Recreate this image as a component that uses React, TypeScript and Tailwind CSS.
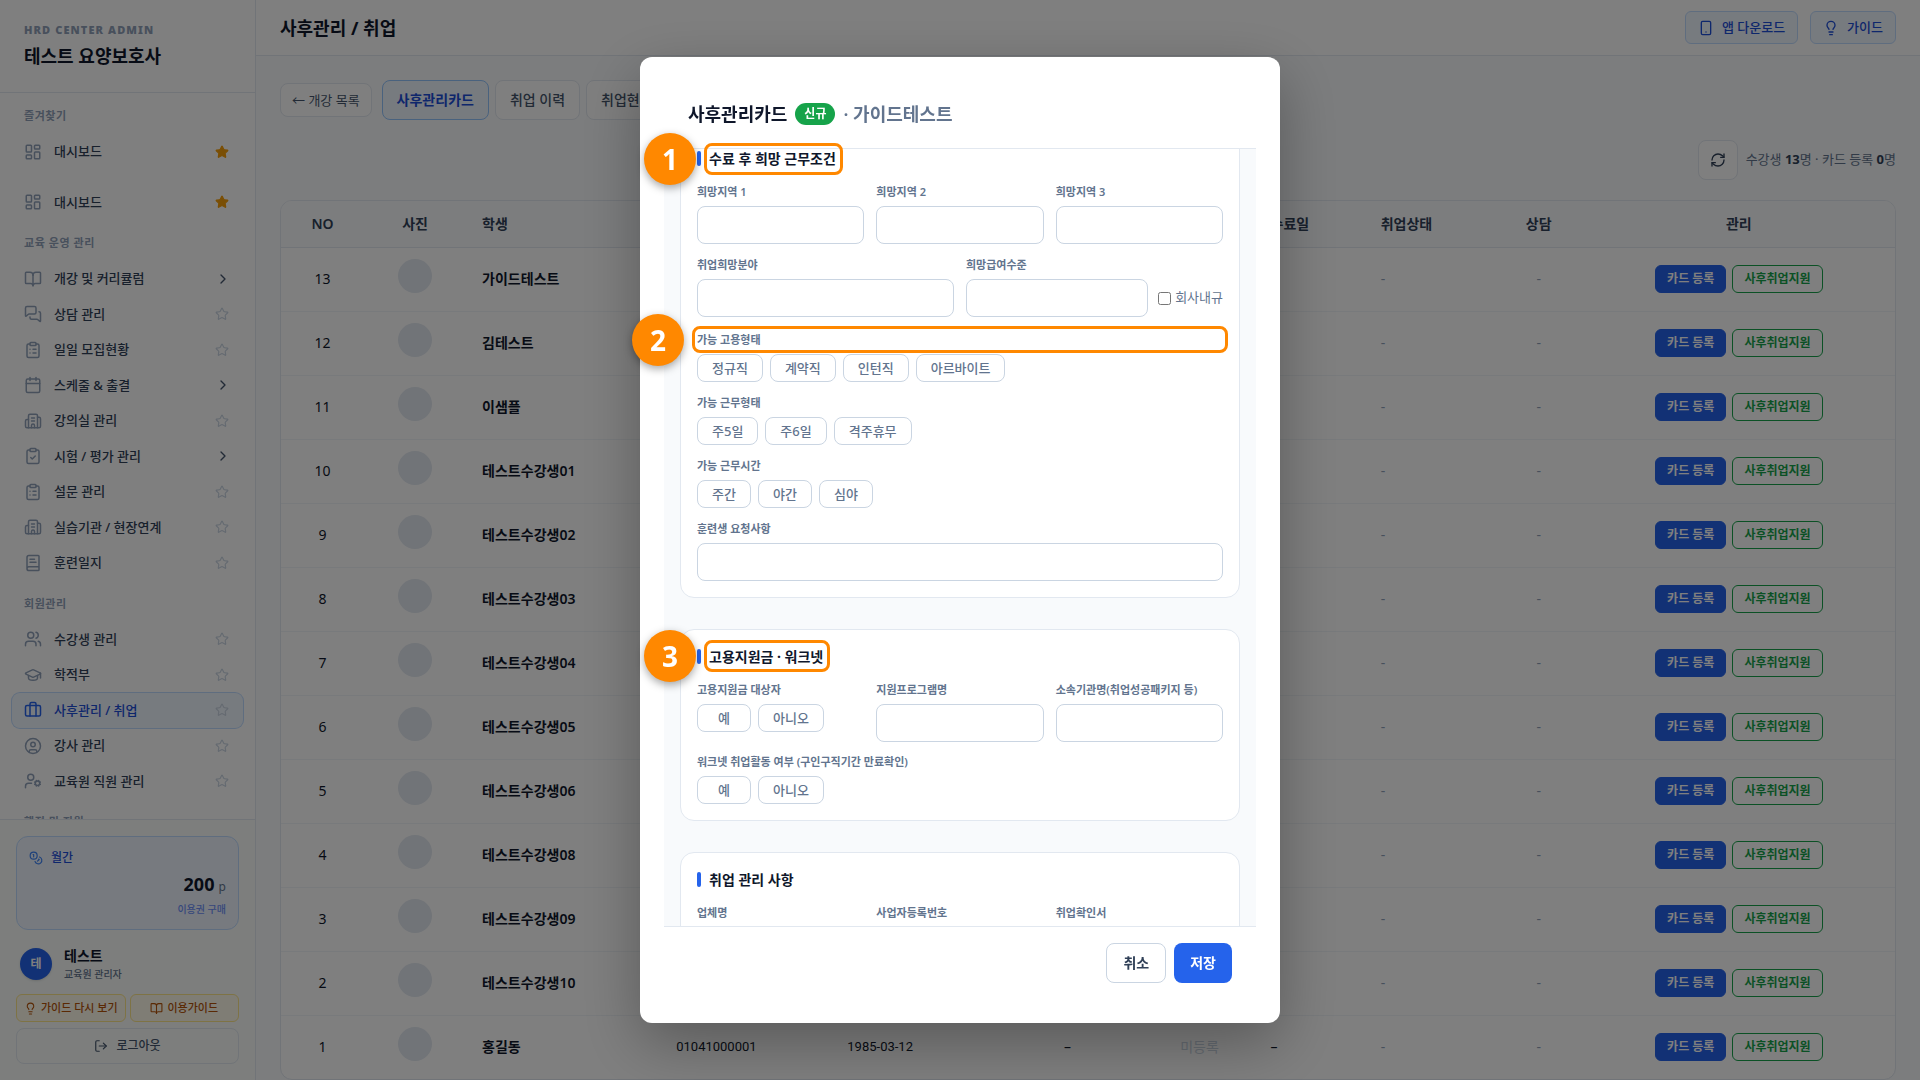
import React, { useLayoutEffect, useRef, useState } from 'react';
import {
  BookOpen,
  BookText,
  Briefcase,
  Building2,
  Calendar,
  ChevronRight,
  CircleUser,
  ClipboardCheck,
  ClipboardList,
  Coins,
  GraduationCap,
  LayoutDashboard,
  Lightbulb,
  LogOut,
  MessagesSquare,
  RefreshCw,
  Smartphone,
  Star,
  UserCog,
  Users,
  type LucideIcon,
} from 'lucide-react';

type MenuItem = {
  label: string;
  icon: LucideIcon;
  kind?: 'fav' | 'group' | 'plain';
  active?: boolean;
};

type MenuSection = { title?: string; items: MenuItem[] };

const menu: MenuSection[] = [
  { title: '즐겨찾기', items: [{ label: '대시보드', icon: LayoutDashboard, kind: 'fav' }] },
  { items: [{ label: '대시보드', icon: LayoutDashboard, kind: 'fav' }] },
  {
    title: '교육 운영 관리',
    items: [
      { label: '개강 및 커리큘럼', icon: BookOpen, kind: 'group' },
      { label: '상담 관리', icon: MessagesSquare },
      { label: '일일 모집현황', icon: ClipboardList },
      { label: '스케줄 & 출결', icon: Calendar, kind: 'group' },
      { label: '강의실 관리', icon: Building2 },
      { label: '시험 / 평가 관리', icon: ClipboardCheck, kind: 'group' },
      { label: '설문 관리', icon: ClipboardList },
      { label: '실습기관 / 현장연계', icon: Building2 },
      { label: '훈련일지', icon: BookText },
    ],
  },
  {
    title: '회원관리',
    items: [
      { label: '수강생 관리', icon: Users },
      { label: '학적부', icon: GraduationCap },
      { label: '사후관리 / 취업', icon: Briefcase, active: true },
      { label: '강사 관리', icon: CircleUser },
      { label: '교육원 직원 관리', icon: UserCog },
    ],
  },
  { title: '행정 및 지원', items: [] },
];

const students = [
  '가이드테스트',
  '김테스트',
  '이샘플',
  '테스트수강생01',
  '테스트수강생02',
  '테스트수강생03',
  '테스트수강생04',
  '테스트수강생05',
  '테스트수강생06',
  '테스트수강생08',
  '테스트수강생09',
  '테스트수강생10',
  '홍길동',
];

function Sidebar() {
  return (
    <aside className="flex w-64 shrink-0 flex-col border-r border-slate-200 bg-white">
      <div className="flex h-[93px] shrink-0 flex-col justify-center border-b border-slate-200 px-6">
        <div className="text-[11px] leading-4 font-black tracking-widest text-slate-400">
          HRD CENTER ADMIN
        </div>
        <div className="mt-1 text-lg leading-7 font-bold text-slate-900">테스트 요양보호사</div>
      </div>

      {/* 메뉴 */}
      <nav className="flex min-h-0 flex-1 flex-col gap-[15px] overflow-hidden px-3 pt-[15px]">
        {menu.map((section, i) => (
          <div key={i} className="shrink-0">
            {section.title && (
              <div className="mb-[10px] px-3 text-[11px] leading-4 font-semibold tracking-wider text-slate-400">
                {section.title}
              </div>
            )}
            {section.items.map((item) => (
              <MenuRow key={item.label} item={item} />
            ))}
          </div>
        ))}
      </nav>

      <SidebarFooter />
    </aside>
  );
}

function MenuRow({ item }: { item: MenuItem }) {
  const Icon = item.icon;
  return (
    <div
      className={`flex items-center rounded-lg px-3 ${
        item.active ? 'bg-[#eff6ff] text-[#1d4ed8] ring-1 ring-[#bfdbfe]' : 'text-slate-700'
      }`}
    >
      <a
        href="#"
        className="flex flex-1 items-center gap-3 py-2 text-[13px] leading-normal font-medium"
      >
        <Icon
          size={18}
          strokeWidth={2}
          className={item.active ? 'text-[#2563eb]' : 'text-slate-400'}
        />
        {item.label}
      </a>
      <div className="flex w-4 justify-start">
        {item.kind === 'group' ? (
          <ChevronRight size={16} className="text-slate-600" />
        ) : (
          <button type="button" aria-label={`${item.label} 즐겨찾기`}>
            <Star
              size={14}
              strokeWidth={2}
              className={item.kind === 'fav' ? 'fill-[#f59e0b] text-[#f59e0b]' : 'text-slate-300'}
            />
          </button>
        )}
      </div>
    </div>
  );
}

function SidebarFooter() {
  return (
    <div className="shrink-0 border-t border-slate-200 bg-[#fafdfb] p-4">
      {/* 이용권 */}
      <div className="rounded-xl border border-[#bfdbfe] bg-[#eff5ff] px-3 pt-[13px] pb-3">
        <div className="flex items-center gap-2 text-xs leading-4 font-medium text-[#1d4ed8]">
          <Coins size={14} className="text-[#3b82f6]" />
          월간
        </div>
        <div className="mt-1 text-right leading-7">
          <span className="text-lg leading-7 font-bold text-slate-900">200</span>{' '}
          <span className="text-xs text-slate-500">p</span>
        </div>
        <a
          href="#"
          className="mt-[2px] block text-right text-[10px] leading-4 font-medium text-[#6d8ff7]"
        >
          이용권 구매
        </a>
      </div>

      {/* 사용자 */}
      <div className="mt-[14px] flex h-10 items-center gap-3 px-1">
        <div className="flex size-8 items-center justify-center rounded-full bg-[#2563eb] text-xs font-bold text-white shadow">
          테
        </div>
        <div>
          <div className="text-sm leading-5 font-bold text-slate-900">테스트</div>
          <div className="text-[10px] leading-4 font-medium text-slate-500">교육원 관리자</div>
        </div>
      </div>

      <div className="mt-[10px] grid grid-cols-2 gap-1">
        <button
          type="button"
          className="flex h-7 items-center justify-center gap-1 rounded-md border border-[#fde68a] bg-[#fffbeb] text-[11px] font-medium whitespace-nowrap text-[#b45309]"
        >
          <Lightbulb size={13} />
          가이드 다시 보기
        </button>
        <button
          type="button"
          className="flex h-7 items-center justify-center gap-1 rounded-md border border-[#fde68a] bg-[#fffbeb] text-[11px] font-medium text-[#b45309]"
        >
          <BookOpen size={13} />
          이용가이드
        </button>
      </div>
      <button
        type="button"
        className="mt-[6px] flex h-9 w-full items-center justify-center gap-2 rounded-lg border border-slate-200 text-xs font-medium text-slate-600"
      >
        <LogOut size={14} />
        로그아웃
      </button>
    </div>
  );
}

function StudentTable() {
  return (
    <div className="overflow-hidden rounded-xl border border-slate-200 bg-white">
      <table className="w-full table-fixed text-sm">
        <colgroup>
          <col className="w-[83px]" />
          <col className="w-[102px]" />
          <col className="w-[194px]" />
          <col className="w-[171px]" />
          <col className="w-[159px]" />
          <col className="w-[154px]" />
          <col className="w-[110px]" />
          <col className="w-[110px]" />
          <col className="w-[130px]" />
          <col className="w-[88px]" />
          <col className="w-[312px]" />
        </colgroup>
        <thead>
          <tr className="h-[46px] border-b border-slate-200 bg-slate-50 text-left text-slate-700 *:font-semibold">
            <th className="text-center">NO</th>
            <th className="text-center">사진</th>
            <th className="px-4">학생</th>
            <th className="px-4">연락처</th>
            <th className="px-4">생년월일</th>
            <th className="text-center">과정</th>
            <th className="text-center">카드</th>
            <th className="px-4">수료일</th>
            <th className="px-4">취업상태</th>
            <th className="text-center">상담</th>
            <th className="text-center">관리</th>
          </tr>
        </thead>
        <tbody>
          {students.map((name, i) => {
            const last = i === students.length - 1;
            return (
              <tr key={name} className="h-16 border-b border-slate-100 text-slate-900 last:border-0">
                <td className="text-center">{students.length - i}</td>
                <td className="pb-[6px] text-center">
                  <div className="mx-auto size-[34px] rounded-full bg-slate-200" />
                </td>
                <td className="px-4 font-semibold">{name}</td>
                <td className="px-4 font-[Roboto,sans-serif] text-[13px]">
                  {last && '01041000001'}
                </td>
                <td className="px-4 font-[Roboto,sans-serif] text-[13px]">
                  {last && '1985-03-12'}
                </td>
                <td className="text-center">{last && '–'}</td>
                <td className="text-center text-slate-300">미등록</td>
                <td className="px-4">{last && '–'}</td>
                <td className="px-4 text-slate-400">-</td>
                <td className="text-center text-slate-400">-</td>
                <td>
                  <div className="flex justify-center gap-[6px] text-xs font-semibold">
                    <button
                      type="button"
                      className="h-7 rounded-md border border-[#2563eb] bg-[#2563eb] px-[11px] text-white"
                    >
                      카드 등록
                    </button>
                    <button
                      type="button"
                      className="h-7 rounded-md border border-[#16a34a] bg-white px-[11px] text-[#16a34a]"
                    >
                      사후취업지원
                    </button>
                  </div>
                </td>
              </tr>
            );
          })}
        </tbody>
      </table>
    </div>
  );
}

function FormCard({ title, children }: { title: string; children: React.ReactNode }) {
  return (
    <section className="rounded-[14px] border border-slate-200 bg-white p-4">
      <h3 className="mb-[15px] flex h-[21px] items-center gap-2 text-sm font-bold text-slate-900">
        <span className="h-[15px] w-1 rounded-xs bg-[#2563eb]" />
        {title}
      </h3>
      {children}
    </section>
  );
}

function TextField({ id, label }: { id: string; label: string }) {
  return (
    <div>
      <label htmlFor={id} className="block text-[11px] leading-4 font-semibold text-slate-500">
        {label}
      </label>
      <input
        id={id}
        type="text"
        className="mt-[6px] block h-[38px] w-full rounded-lg border border-slate-300 bg-white px-3 text-sm"
      />
    </div>
  );
}

// 복수 선택 버튼 묶음
function ChipField({ label, options }: { label: string; options: string[] }) {
  const [selected, setSelected] = useState<string[]>([]);

  const toggle = (option: string) => {
    setSelected((prev) =>
      prev.includes(option) ? prev.filter((v) => v !== option) : [...prev, option]
    );
  };

  return (
    <div role="group" aria-label={label}>
      <div className="text-[11px] leading-4 font-semibold text-slate-500">{label}</div>
      <div className="mt-[6px] flex gap-[7px]">
        {options.map((option) => (
          <button
            key={option}
            type="button"
            onClick={() => toggle(option)}
            className={`h-7 min-w-[54px] rounded-lg border px-[14px] text-[13px] leading-5 font-medium ${
              selected.includes(option)
                ? 'border-[#2563eb] bg-[#eff6ff] text-[#2563eb]'
                : 'border-slate-300 bg-white text-slate-500'
            }`}
          >
            {option}
          </button>
        ))}
      </div>
    </div>
  );
}

// 안내 번호 + 강조 테두리
function Callout({ no, className }: { no: number; className: string }) {
  return (
    <div
      className={`pointer-events-none absolute rounded-lg border-3 border-[#ff8800] ${className}`}
    >
      <span className="absolute top-1/2 -left-[63px] flex size-[52px] -translate-y-1/2 items-center justify-center rounded-full bg-[#ff8800] text-[28px] font-bold text-white shadow-[0_3px_8px_rgba(0,0,0,0.35)]">
        {no}
      </span>
    </div>
  );
}

function CardModal() {
  const bodyRef = useRef<HTMLDivElement>(null);

  useLayoutEffect(() => {
    if (bodyRef.current) bodyRef.current.scrollTop = 38;
  }, []);

  return (
    <div className="fixed inset-0 flex items-center justify-center bg-black/50">
      <div
        role="dialog"
        aria-labelledby="card-title"
        className="relative flex max-h-[calc(100vh-114px)] w-[640px] flex-col rounded-xl bg-white p-6 shadow-[0_20px_60px_rgba(0,0,0,0.3)]"
      >
        <header className="flex h-[68px] shrink-0 items-center gap-2 border-b border-slate-200 px-6 pb-[2px]">
          <h2 id="card-title" className="text-lg font-bold text-slate-900">
            사후관리카드
          </h2>
          <span className="flex h-[22px] items-center rounded-full bg-[#16a34a] px-[9px] text-xs font-bold text-white">
            신규
          </span>
          <span className="text-lg font-semibold text-slate-500">· 가이드테스트</span>
        </header>

        <div
          ref={bodyRef}
          className="flex min-h-0 flex-col gap-[31px] overflow-y-auto bg-slate-50 px-4 py-5 [scrollbar-width:none] *:shrink-0"
        >
          <FormCard title="수료 후 희망 근무조건">
            <div className="flex flex-col gap-[13px]">
              <div className="grid grid-cols-3 gap-3">
                <TextField id="region1" label="희망지역 1" />
                <TextField id="region2" label="희망지역 2" />
                <TextField id="region3" label="희망지역 3" />
              </div>
              <div className="grid grid-cols-2 gap-3">
                <TextField id="field" label="취업희망분야" />
                <div className="flex items-end gap-[10px]">
                  <div className="min-w-0 flex-1">
                    <TextField id="salary" label="희망급여수준" />
                  </div>
                  <label className="flex h-[38px] items-center gap-1 text-[13px] text-slate-500">
                    <input type="checkbox" className="size-[13px]" />
                    회사내규
                  </label>
                </div>
              </div>
              <div className="flex flex-col gap-[13px] pt-[2px]">
                <ChipField
                  label="가능 고용형태"
                  options={['정규직', '계약직', '인턴직', '아르바이트']}
                />
                <ChipField label="가능 근무형태" options={['주5일', '주6일', '격주휴무']} />
                <ChipField label="가능 근무시간" options={['주간', '야간', '심야']} />
                <TextField id="request" label="훈련생 요청사항" />
              </div>
            </div>
          </FormCard>

          <FormCard title="고용지원금 · 워크넷">
            <div className="flex flex-col gap-3">
              <div className="grid grid-cols-3 gap-3">
                <ChipField label="고용지원금 대상자" options={['예', '아니오']} />
                <TextField id="program" label="지원프로그램명" />
                <TextField id="agency" label="소속기관명(취업성공패키지 등)" />
              </div>
              <ChipField
                label="워크넷 취업활동 여부 (구인구직기간 만료확인)"
                options={['예', '아니오']}
              />
            </div>
          </FormCard>

          <FormCard title="취업 관리 사항">
            <div className="grid grid-cols-3 gap-3">
              <TextField id="company" label="업체명" />
              <TextField id="bizno" label="사업자등록번호" />
              <TextField id="proof" label="취업확인서" />
            </div>
          </FormCard>
        </div>

        <footer className="flex shrink-0 justify-end gap-2 border-t border-slate-200 px-6 py-4 text-sm font-semibold">
          <button
            type="button"
            className="h-10 rounded-lg border border-slate-300 bg-white px-4 text-slate-700"
          >
            취소
          </button>
          <button type="button" className="h-10 rounded-lg bg-[#2563eb] px-4 text-white">
            저장
          </button>
        </footer>

        <Callout no={1} className="top-[86px] left-16 h-8 w-[139px]" />
        <Callout no={2} className="top-[269px] right-[52px] left-[52px] h-[27px]" />
        <Callout no={3} className="top-[583px] left-16 h-8 w-[126px]" />
      </div>
    </div>
  );
}

export default function App() {
  return (
    <div className="flex h-screen overflow-hidden bg-slate-50 font-['Noto_Sans','Noto_Sans_CJK_KR',sans-serif] text-slate-900">
      <Sidebar />

      <div className="flex min-w-0 flex-1 flex-col">
        {/* 상단 바 */}
        <header className="flex h-14 shrink-0 items-center justify-between border-b border-slate-200 bg-white px-6">
          <h1 className="text-lg font-bold">사후관리 / 취업</h1>
          <div className="flex gap-3 text-[13px] font-medium text-[#1d4ed8]">
            <button
              type="button"
              className="flex h-[33px] items-center gap-2 rounded-md border border-[#bfdbfe] bg-[#eff6ff] px-3"
            >
              <Smartphone size={16} />앱 다운로드
            </button>
            <button
              type="button"
              className="flex h-[33px] items-center gap-2 rounded-md border border-[#bfdbfe] bg-[#eff6ff] px-3"
            >
              <Lightbulb size={16} />
              가이드
            </button>
          </div>
        </header>

        <main className="min-h-0 flex-1 overflow-hidden p-6">
          {/* 탭 */}
          <div className="flex items-center gap-[6px] text-sm text-slate-600">
            <button
              type="button"
              className="mr-1 h-[34px] rounded-lg border border-slate-200 bg-white px-[11px] text-[13px]"
            >
              ← 개강 목록
            </button>
            <button
              type="button"
              className="h-10 rounded-lg border border-[#93c5fd] bg-[#eff6ff] px-[14px] font-bold text-[#1d4ed8]"
            >
              사후관리카드
            </button>
            <button
              type="button"
              className="h-10 rounded-lg border border-slate-200 bg-white px-[14px] font-medium"
            >
              취업 이력
            </button>
            <button
              type="button"
              className="h-10 rounded-lg border border-slate-200 bg-white px-[14px] font-medium"
            >
              취업현황
            </button>
          </div>

          <div className="my-5 flex items-center justify-end gap-2 text-[13px] text-slate-500">
            <button
              type="button"
              aria-label="새로고침"
              className="flex size-10 items-center justify-center rounded-lg border border-slate-200 bg-white text-slate-700"
            >
              <RefreshCw size={16} />
            </button>
            <span>
              수강생 <b className="text-slate-700">13</b>명 · 카드 등록{' '}
              <b className="text-slate-700">0</b>명
            </span>
          </div>

          <StudentTable />
        </main>
      </div>

      <CardModal />
    </div>
  );
}
